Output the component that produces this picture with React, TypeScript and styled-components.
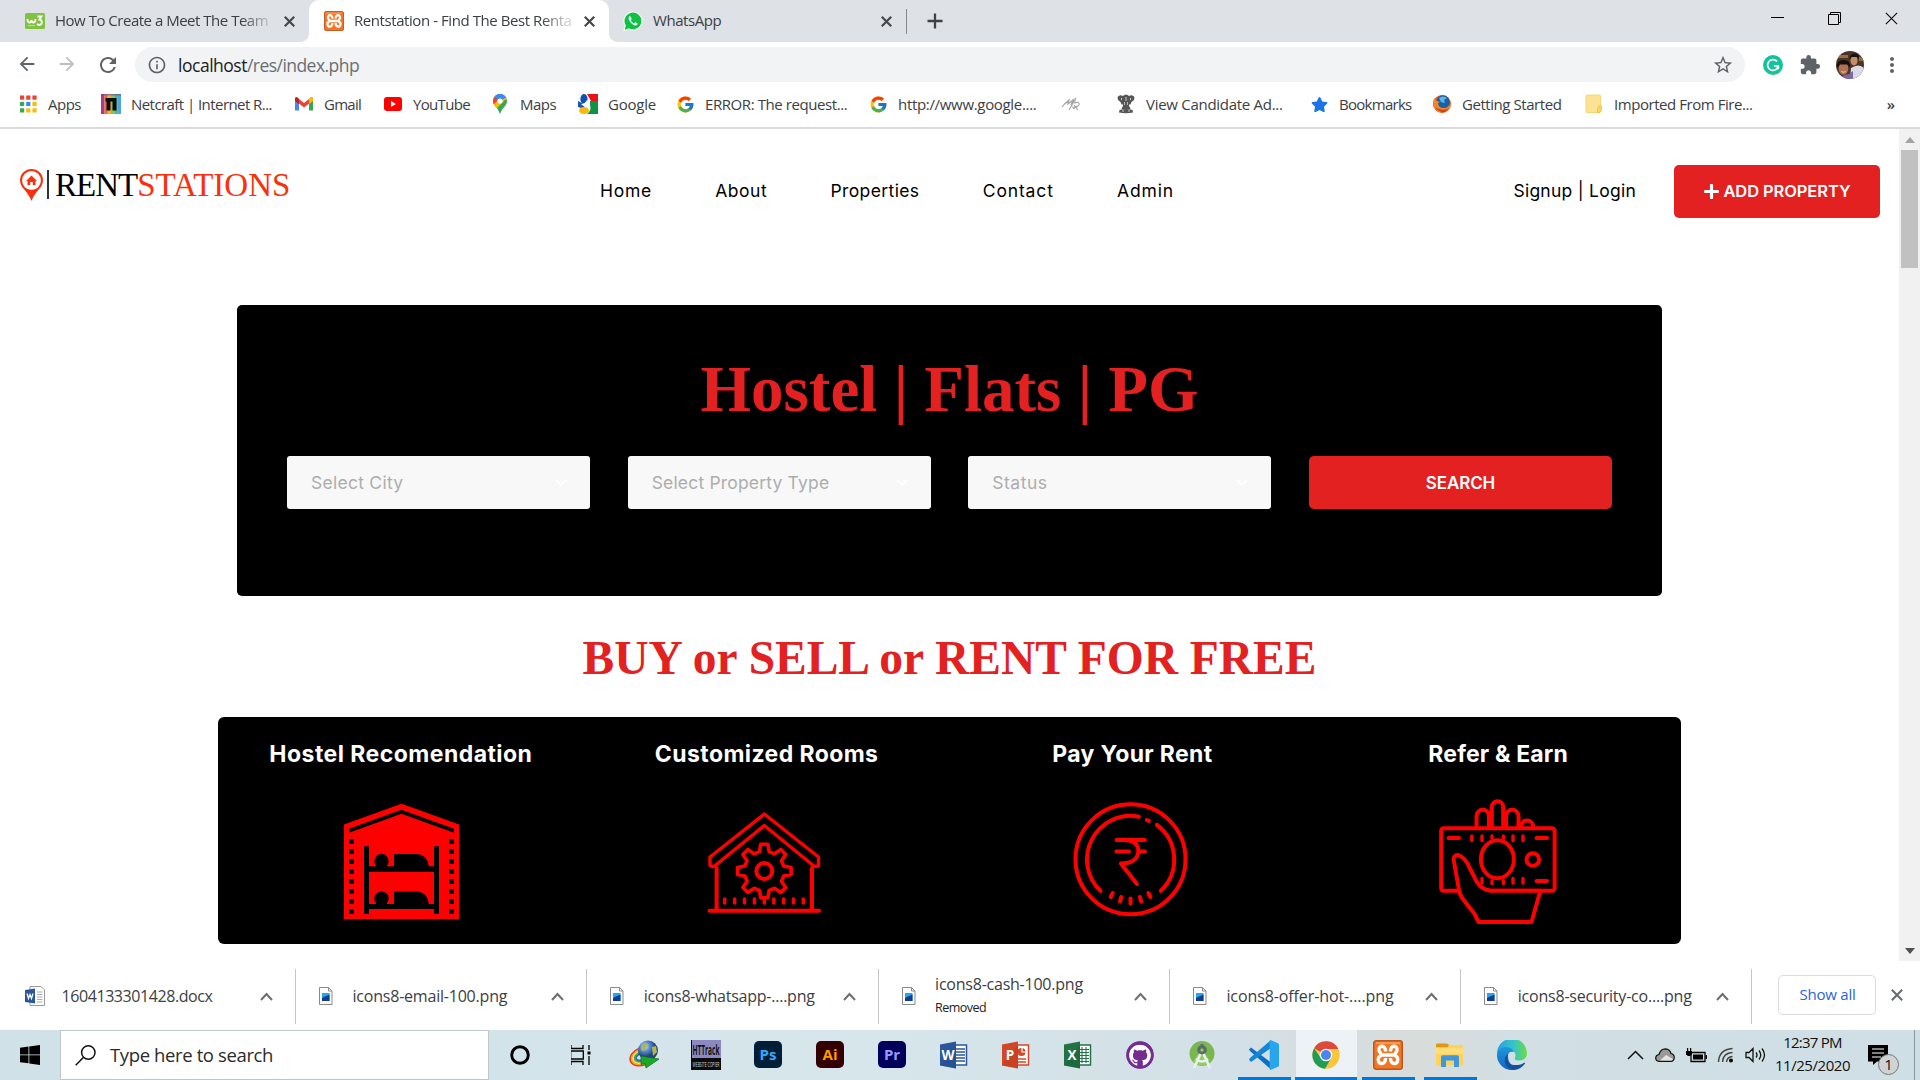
import React from 'react';
import styled, { createGlobalStyle } from 'styled-components';
import { FaGithub, FaPlus, FaStar } from 'react-icons/fa';
import { FcGoogle } from 'react-icons/fc';
import { MdArrowBack, MdArrowForward, MdExtension, MdInfoOutline, MdMoreVert, MdRefresh, MdStarBorder } from 'react-icons/md';

const UI = '"Open Sans", "Noto Sans", sans-serif';
const SITE = 'Inter, "Open Sans", sans-serif';
const SERIF = '"Liberation Serif", "Times New Roman", serif';
const RED = '#e22120';

const Global = createGlobalStyle`
  * { box-sizing: border-box; }
  html, body { margin: 0; padding: 0; overflow: hidden; background: #fff; }
  svg { display: block; flex: none; }
`;

const Screen = styled.div`
  width: 1920px;
  height: 1080px;
  display: flex;
  flex-direction: column;
  overflow: hidden;
  background: #fff;
  font-family: ${UI};
`;

const Label = styled.span<{ $size?: number; $ls?: number; $color?: string }>`
  font-size: ${p => p.$size ?? 15}px;
  letter-spacing: ${p => p.$ls ?? -0.45}px;
  color: ${p => p.$color ?? '#3c4043'};
  line-height: 24px;
  white-space: pre;
`;

/* ---------- tab strip ---------- */
const TabStrip = styled.div`
  flex: none;
  height: 42px;
  display: flex;
  background: #dee1e6;
`;
const Tab = styled.div<{ $active?: boolean; $width: number; $pad: number }>`
  position: relative;
  width: ${p => p.$width}px;
  padding: 0 14px 0 ${p => p.$pad}px;
  display: flex;
  align-items: center;
  gap: 10px;
  background: ${p => (p.$active ? '#fff' : 'transparent')};
  border-radius: ${p => (p.$active ? '10px 10px 0 0' : '0')};
  ${p => p.$active && `
    &::before, &::after { content: ''; position: absolute; bottom: 0; width: 8px; height: 8px; }
    &::before { left: -8px; background: radial-gradient(circle at 0 0, transparent 7.5px, #fff 8px); }
    &::after { right: -8px; background: radial-gradient(circle at 100% 0, transparent 7.5px, #fff 8px); }
  `}
`;
const TabTitle = styled(Label)<{ $fade?: boolean }>`
  flex: 1;
  padding-bottom: 2px;
  line-height: 23px;
  overflow: hidden;
  ${p => p.$fade && 'mask-image: linear-gradient(90deg, #000 calc(100% - 32px), rgba(0,0,0,.25) calc(100% - 8px));'}
`;
const TabDivider = styled.i`
  width: 1px;
  height: 25px;
  margin-top: 9px;
  background: #85888c;
`;
const NewTab = styled.div`
  width: 56px;
  display: grid;
  place-items: center;
`;
const WindowControls = styled.div`
  margin-left: auto;
  padding: 12px 22px 0 0;
  display: flex;
  gap: 44px;
`;

/* ---------- toolbar ---------- */
const Toolbar = styled.div`
  flex: none;
  height: 45px;
  padding: 0 0 0 18px;
  display: flex;
  align-items: center;
`;
const NavButtons = styled.div`
  width: 117px;
  display: flex;
  gap: 18px;
  margin-left: -2px;
`;
const Omnibox = styled.div`
  flex: none;
  width: 1610px;
  height: 35px;
  margin-left: 2px;
  padding: 0 11px 0 12px;
  display: flex;
  align-items: center;
  border-radius: 18px;
  background: #f1f3f4;
`;
const Url = styled.div`
  flex: 1;
  padding-left: 11px;
`;
const ToolbarActions = styled.div`
  width: 159px;
  padding-left: 18px;
  display: flex;
  align-items: center;
  justify-content: space-between;
`;
const Bookmarks = styled.div`
  flex: none;
  height: 42px;
  padding: 0 25px 6px 18px;
  display: flex;
  align-items: center;
  border-bottom: 2px solid #d8dade;
`;
const Bookmark = styled.div<{ $width: number }>`
  width: ${p => p.$width}px;
  display: flex;
  align-items: center;
  gap: 10px;
`;
const IconSlot = styled.span`
  width: 20px;
  display: grid;
  place-items: center;
`;
const More = styled(Label)`
  margin-left: auto;
  font-weight: 600;
`;

/* ---------- viewport ---------- */
const Viewport = styled.div`
  flex: none;
  height: 832px;
  display: flex;
`;
const Page = styled.main`
  width: 1899px;
  display: flex;
  flex-direction: column;
  align-items: center;
  font-family: ${SITE};
`;
const Scrollbar = styled.div`
  width: 21px;
  padding: 0 2px;
  display: flex;
  flex-direction: column;
  align-items: center;
  background: #f1f1f1;
`;
const ScrollThumb = styled.div`
  width: 17px;
  height: 118px;
  background: #c1c1c1;
`;
const ScrollArrow = styled.div`
  height: 21px;
  display: grid;
  place-items: center;
`;
const Spacer = styled.div`
  flex: 1;
`;

const Header = styled.header`
  align-self: stretch;
  flex: none;
  height: 124px;
  padding: 0 19px 0 20px;
  display: flex;
  align-items: center;
`;
const Brand = styled.div`
  width: 580px;
  padding-bottom: 13px;
  display: flex;
  align-items: center;
`;
const BrandBar = styled.i`
  width: 2px;
  height: 29px;
  margin: 0 6px 0 4px;
  background: #333;
`;
const BrandText = styled.span<{ $color: string; $ls: number }>`
  font: 33px/36px ${SERIF};
  letter-spacing: ${p => p.$ls}px;
  color: ${p => p.$color};
`;
const SiteNav = styled.nav`
  display: flex;
  gap: 63.3px;
`;
const SiteLabel = styled(Label)`
  font-family: ${SITE};
`;
const Account = styled.div`
  margin-left: auto;
  padding-right: 38px;
`;
const RedButton = styled.button<{ $width: number }>`
  width: ${p => p.$width}px;
  height: 53px;
  padding: 0;
  display: flex;
  align-items: center;
  justify-content: center;
  gap: 3px;
  border: 0;
  border-radius: 5px;
  background: ${RED};
  font-family: ${SITE};
  font-weight: 600;
`;

const Hero = styled.section`
  flex: none;
  width: 1425px;
  height: 291px;
  margin-top: 52px;
  padding: 47px 50px 0;
  border-radius: 5px;
  background: #000;
`;
const HeroTitle = styled.h1`
  margin: 0 0 30px;
  font: 700 65px/74px ${SERIF};
  text-align: center;
  color: ${RED};
`;
const Filters = styled.div`
  display: flex;
  justify-content: space-between;
`;
const Select = styled.div`
  width: 303px;
  height: 53px;
  padding: 0 23px 0 24px;
  display: flex;
  align-items: center;
  justify-content: space-between;
  border-radius: 3px;
  background: #f8f8f8;
`;
const Slogan = styled.h2`
  margin: 35px 0 32px;
  font: 700 47.500px/54px ${SERIF};
  letter-spacing: -0.03px;
  color: ${RED};
`;
const Features = styled.section`
  flex: none;
  width: 1463px;
  height: 227px;
  display: grid;
  grid-template-columns: repeat(4, 1fr);
  border-radius: 6px;
  background: #000;
`;
const Feature = styled.article`
  display: flex;
  flex-direction: column;
  align-items: center;
  padding-top: 23px;
`;
const FeatureTitle = styled.h3<{ $ls: number }>`
  margin: 0 0 28px;
  font: 700 23px/28px ${SITE};
  letter-spacing: ${p => p.$ls}px;
  color: #fff;
`;

/* ---------- downloads ---------- */
const Shelf = styled.div`
  flex: none;
  height: 69px;
  padding-top: 8px;
  display: flex;
`;
const Download = styled.div<{ $first?: boolean }>`
  width: ${p => (p.$first ? 296 : 291.3)}px;
  height: 55px;
  padding: 0 22px 1px ${p => (p.$first ? 25 : 20)}px;
  display: flex;
  align-items: center;
  gap: 16.500px;
  border-right: 1.5px solid #c6c6c6;
`;
const FileText = styled.div`
  flex: 1;
  display: flex;
  flex-direction: column;
`;
const ShowAll = styled.div`
  width: 98px;
  height: 40px;
  margin: 6px 15px 0 26px;
  padding-bottom: 2px;
  display: grid;
  place-items: center;
  border: 1px solid #dadce0;
  border-radius: 5px;
`;
const ShelfClose = styled.div`
  margin-top: 20px;
`;

/* ---------- taskbar ---------- */
const Taskbar = styled.div`
  flex: none;
  height: 50px;
  display: flex;
  background: linear-gradient(90deg, #d0e1e8, #d3e3ea 25%, #d6e6eb 45%, #d3e0e7 64%, #d8dcdb 74%, #d2dfe4 79%, #cfdfe6);
`;
const Start = styled.div`
  width: 60px;
  display: grid;
  place-items: center;
`;
const SearchBox = styled.div`
  width: 429px;
  padding-left: 14px;
  display: flex;
  align-items: center;
  gap: 14px;
  background: #fff;
  border: 1px solid #bfc7cb;
`;
const TaskButton = styled.div<{ $state?: 'open' | 'active' }>`
  width: 62px;
  display: flex;
  align-items: center;
  justify-content: center;
  padding-top: ${p => (p.$state ? 3 : 0)}px;
  ${p => p.$state === 'active' && 'background: linear-gradient(#ecf2f5, #ecf2f5) center / 61px 100% no-repeat;'}
  border-bottom: ${p => (p.$state ? '3px solid #0078d7' : '0 solid')};
  border-image: ${p => (p.$state === 'open' ? 'linear-gradient(90deg, transparent 6px, #0078d7 6px, #0078d7 57px, transparent 57px) 1' : 'none')};
`;
const Adobe = styled.div<{ $bg: string; $fg: string }>`
  width: 28px;
  height: 27px;
  margin-bottom: 2px;
  display: grid;
  place-items: center;
  border-radius: 5px;
  background: ${p => p.$bg};
  color: ${p => p.$fg};
  font: 700 15px/25px ${UI};
`;
const Tray = styled.div`
  margin-left: auto;
  width: 139px;
  display: flex;
  align-items: center;
  justify-content: space-between;
`;
const Clock = styled.div`
  width: 93px;
  margin-right: 1px;
  padding-bottom: 2px;
  display: flex;
  flex-direction: column;
  align-items: center;
  justify-content: center;
`;
const ClockLine = styled(Label)`
  line-height: 23px;
`;
const Notices = styled.div`
  position: relative;
  width: 54px;
  padding: 15px 0 0 8px;
`;
const Badge = styled.span`
  position: absolute;
  left: 18px;
  top: 24px;
  width: 21px;
  height: 21px;
  border: 1px solid #777;
  border-radius: 50%;
  background: #cfd3d4;
  font: 15px/19px ${UI};
  text-align: center;
  color: #111;
`;
const ShowDesktop = styled.i`
  width: 6px;
  border-left: 1px solid #8a979d;
`;

/* ---------- icons ---------- */
const Cross = ({ size = 10, color = '#45494d', w = 2 }: { size?: number; color?: string; w?: number }) => (
  <svg width={size} height={size} viewBox="0 0 10 10"><path d="M.7.7l8.6 8.6M9.3.7L.7 9.3" stroke={color} strokeWidth={w} /></svg>
);
const Caret = () => (
  <svg width="13" height="9" viewBox="0 0 13 9"><path d="M1 8l5.5-6L12 8" fill="none" stroke="#6b6f73" strokeWidth="2" /></svg>
);
const W3Icon = () => (
  <svg width="20" height="20" viewBox="0 0 20 20">
    <rect y="2" width="20" height="16" rx="1.5" fill="#80c342" />
    <path d="M2.5 8q0 3.500 2 3.500t2-2.500q0 2.500 2 2.500t2-3.500M12.500 5.500h4l-2 3q2.500.3 2.300 3-.3 2.700-2.600 2.500-1.500-.1-2-1.400" fill="none" stroke="#fff" strokeWidth="1.800" />
    <path d="M3 14.700h7" stroke="#c8e6a8" strokeWidth=".9" />
  </svg>
);
const XamppIcon = ({ size = 20 }: { size?: number }) => (
  <svg width={size} height={size} viewBox="0 0 30 30">
    <rect x=".7" y=".7" width="28.600" height="28.600" rx="2.500" fill="#f37623" stroke="#bd5618" strokeWidth="1.400" />
    <path d="M3 2.500h24v1.300H3z" fill="#f7ae7c" />
    <path d="M12.500 11.500C13 4.500 5 5 6 10.500 6.500 13 9 13 8 15.500 4 17 4.500 24 9 23.500 12.500 23 12.500 20 12.500 18M17.500 11.500C17 4.500 25 5 24 10.500 23.500 13 21 13 22 15.500 26 17 25.500 24 21 23.500 17.500 23 17.500 20 17.500 18M9 15h12" fill="none" stroke="#fff" strokeWidth="3.400" />
  </svg>
);
const WhatsAppIcon = () => (
  <svg width="20" height="20" viewBox="0 0 20 20">
    <path d="M1 19.500l1.200-5A9 9 0 1 1 6 18z" fill="#0fc144" stroke="#f2fbf4" strokeWidth="1.200" />
    <path d="M6.300 5.500c-1 1-.8 2.600.2 4.300 1.300 2.200 3.200 4 5.500 4.600 1.400.2 2.500-.6 2.600-1.900l-2.200-1.200-1.200 1.200c-1.500-.5-2.700-1.700-3.500-3.200l1-1.200-1-2.500z" fill="#fff" />
  </svg>
);
const AppsIcon = () => (
  <svg width="20" height="20" viewBox="0 0 20 20">
    {['#ea4335', '#ea4335', '#ea4335', '#34a853', '#4285f4', '#fbbc04', '#34a853', '#fbbc04', '#fbbc04'].map((c, i) => (
      <rect key={i} x={2 + (i % 3) * 6.200} y={1.500 + Math.floor(i / 3) * 6.400} width="4.200" height="4.200" fill={c} />
    ))}
  </svg>
);
const NetcraftIcon = () => (
  <svg width="20" height="20" viewBox="0 0 20 20">
    {['#b0378f', '#e0713a', '#eab62f', '#8fc14b', '#45b88f', '#4fa7d8'].map((c, i) => <rect key={c} x={i * 3.330} width="3.500" height="20" fill={c} />)}
    <path d="M0 0h20v1.500H0z" fill="#6a4aa0" opacity=".6" />
    <path d="M4.500 4h11v12.500h-4V7.500h-2v9h-4V7.500h-1z" fill="#0a0a0a" />
  </svg>
);
const GmailIcon = () => (
  <svg width="20" height="20" viewBox="0 0 20 20">
    <path d="M1 5v11.500h4V9z" fill="#4285f4" /><path d="M19 5v11.500h-4V9z" fill="#34a853" />
    <path d="M1 4.500Q1 3 2.500 3L10 9l7.500-6Q19 3 19 4.500v2L10 13.500 1 6.500z" fill="#ea4335" />
    <path d="M15 5l1.500-1.500Q19 2.500 19 5v2l-4 3z" fill="#fbbc04" /><path d="M5 5L3.500 3.500Q1 2.500 1 5v2l4 3z" fill="#c5221f" />
  </svg>
);
const YouTubeIcon = () => (
  <svg width="20" height="20" viewBox="0 0 20 20"><rect x="1" y="3" width="18" height="14" rx="3" fill="#f00" /><path d="M8 7l5 3-5 3z" fill="#fff" /></svg>
);
const MapsIcon = () => (
  <svg width="20" height="20" viewBox="0 0 20 20">
    <clipPath id="pin"><path d="M10 0a7 7 0 0 1 7 7c0 5-5.500 6.500-7 13-1.500-6.500-7-8-7-13a7 7 0 0 1 7-7z" /></clipPath>
    <g clipPath="url(#pin)"><path d="M0 0h20v20H0z" fill="#34a853" /><path d="M0 0l10 7-6 7-4-3z" fill="#ea4335" /><path d="M4 0h14l-8 7-6-5z" fill="#4285f4" /><path d="M17 4L5 16 2 12l8-8z" fill="#fbbc04" /><path d="M17 6L6 19h8z" fill="#34a853" /><path d="M4 2L8 0h9v3l-7 4z" fill="#4285f4" /></g>
    <circle cx="10" cy="7" r="2.600" fill="#fff" />
  </svg>
);
const OldGoogleIcon = () => (
  <svg width="20" height="20" viewBox="0 0 20 20">
    <path d="M9 0h11v7h-7z" fill="#e8131a" /><path d="M12 7h8v13H9q5-4 3-9z" fill="#0b9444" /><path d="M0 7l8 4-2 4-6-2z" fill="#1a57b5" />
    <ellipse cx="6" cy="5" rx="3.600" ry="5" fill="#1250b0" /><path d="M3 10q4 0 6-4l3 3q1 5-4 5z" fill="#fff" /><ellipse cx="6" cy="16.500" rx="5" ry="3.500" fill="#f6b90c" />
  </svg>
);
const SketchIcon = () => (
  <svg width="20" height="16" viewBox="0 0 20 16"><path d="M1 11q3-4 7-7l-1 4 5-4-2 5 5-7-7 12M3 8l4-2M13 7q6-2 5 2-2 3-7 2M13 9l4 5M11 4l4 1M12 13l4-3" fill="none" stroke="#a5a5a5" strokeWidth="1.200" /></svg>
);
const EmblemIcon = () => (
  <svg width="20" height="20" viewBox="0 0 20 20" fill="#555">
    <path d="M1.500 3Q4 0 7 2q3-3 6 0 3-2 5.500 1l-.5 3-2.500 2-1 2.500H13V13H7v-2.500H5.500l-1-2.500L2 6z" /><path d="M6.500 12.500h7l1 2.500h-9zM3.500 16q6.500-2 13 0l.5 2.500q-7 1.500-14 0z" />
    <path d="M5 4h1v2H5zM9.500 3h1v4h-1zM14 4h1v2h-1zM8 8h.8v3H8zM11.200 8h.8v3h-.8zM6 16.500h2v1H6zM12 16.500h2v1h-2z" fill="#ccc" />
  </svg>
);
const FirefoxIcon = () => (
  <svg width="20" height="20" viewBox="0 0 20 20">
    <circle cx="10" cy="10" r="9" fill="#e2571c" /><circle cx="11" cy="8" r="6.800" fill="#1f5fa8" /><path d="M7 4q4-3 8 0l-3 2 1 3-4-1z" fill="#56b8e8" />
    <path d="M2 4q-2 8 2 12 6 5 12 0 3-3 3-8-2 6-7 6Q6 14 6 9L8 8 5 7z" fill="#f0882a" /><path d="M3 13q4 6 10 5l5-5q-6 6-15 0z" fill="#d63e1c" />
  </svg>
);
const FolderIcon = () => (
  <svg width="20" height="20" viewBox="0 0 20 20"><rect x="2" y="1" width="14.500" height="17.500" rx="1" fill="#fde293" stroke="#f3cf63" strokeWidth=".8" /><path d="M13.500 18.500v-5l1.500-1.500h2.500v5l-1.500 1.500z" fill="#fbd45c" stroke="#e9b93d" strokeWidth=".6" /></svg>
);
const GrammarlyIcon = () => (
  <svg width="20" height="20" viewBox="0 0 20 20"><circle cx="10" cy="10" r="10" fill="#15c39a" /><path d="M14 6.400a5.400 5.400 0 1 0 1.300 4.600h-4.500M15.300 11v3.200" fill="none" stroke="#fff" strokeWidth="1.700" /></svg>
);
const Avatar = () => (
  <svg width="28" height="28" viewBox="0 0 28 28">
    <clipPath id="face"><circle cx="14" cy="14" r="14" /></clipPath>
    <g clipPath="url(#face)">
      <path d="M0 0h28v28H0z" fill="#4c3426" /><path d="M2 4h10v3H2zM23 6h5v4h-5z" fill="#94703c" />
      <path d="M14 28l1-11q8-5 13 0v11z" fill="#dcdae6" /><ellipse cx="18" cy="9.500" rx="3.500" ry="5" fill="#c48c69" /><path d="M13.500 9q0-6.500 5-6.500t4.500 6.500l-1.500-3h-6z" fill="#19120f" />
      <path d="M3 28q3-4 10-5l4-3v8z" fill="#7d68a6" /><ellipse cx="7.500" cy="17.500" rx="4.800" ry="6.300" fill="#b07350" /><path d="M1 17Q0 9 7.500 9t6.500 8l-2.500-3.500H4z" fill="#17100d" />
      <path d="M5.500 20.500q2 1.500 4 0" stroke="#eee" fill="none" strokeWidth=".8" />
    </g>
  </svg>
);
const BrandPin = () => (
  <svg width="23" height="32" viewBox="0 0 23 32">
    <path d="M11.500 0A11.500 11.500 0 0 1 23 11.500C23 19 15 22 11.500 32 8 22 0 19 0 11.500A11.500 11.500 0 0 1 11.500 0z" fill="#f8310c" />
    <circle cx="11.500" cy="11.500" r="9.400" fill="#fff" /><path d="M11.500 6.500L17 12h-1.500v4h-2.700v-3h-2.600v3H7.500v-4H6z" fill="#f8310c" />
  </svg>
);
const ImageFile = () => (
  <svg width="20" height="20" viewBox="0 0 20 20">
    <path d="M3.500 1.500h9l3.500 3.500v13.500H3.500z" fill="#fdfdfd" stroke="#8b8b8b" /><path d="M12.500 1.500V5H16" fill="none" stroke="#8b8b8b" />
    <path d="M6 7h7.500v8H6z" fill="#2aa4ee" /><path d="M6 15v-3l3-1.500 4.500-2V15z" fill="#103f92" />
  </svg>
);
const WordFile = () => (
  <svg width="20" height="20" viewBox="0 0 20 20">
    <path d="M5 .5h11l3.500 3.500v15.500H5z" fill="#fff" stroke="#9a9a9a" /><path d="M12 6h5.500M12 8.500h5.500M12 11h5.500M12 13.500h5.500M12 16h5.500" stroke="#aaa" />
    <path d="M0 4l10-1.500v15L0 16z" fill="#2b579a" /><path d="M2 7.500l1.500 5 1.500-4 1.500 4L8 7.500" fill="none" stroke="#fff" strokeWidth="1.300" />
  </svg>
);
const OfficeIcon = ({ color, dark, letter, kind }: { color: string; dark: string; letter: string; kind: 'w' | 'p' | 'x' }) => (
  <svg width="28" height="28" viewBox="0 0 28 28">
    <rect x="13" y="4" width="13.500" height="20" fill="#fff" stroke={color} strokeWidth="1.500" />
    {kind === 'w' && <path d="M15 8h10M15 11h10M15 14h10M15 17h10M15 20h10" stroke={color} strokeWidth="1.300" />}
    {kind === 'p' && <><circle cx="19.500" cy="11" r="4" fill={color} /><path d="M20 6v5h5" stroke="#fff" strokeWidth="1.200" fill="none" /><path d="M16 18h8M16 21h8" stroke={color} strokeWidth="1.300" /></>}
    {kind === 'x' && <path d="M18 6v16M22 6v16M15 8.500h10M15 11.500h10M15 14.500h10M15 17.500h10M15 20.500h10" stroke={color} strokeWidth="1.100" />}
    <path d="M0 3.500L16 .5v27L0 24.500z" fill={color} /><path d="M0 24.500l16-21v24z" fill={dark} opacity=".25" />
    <text x="8" y="19" textAnchor="middle" fontFamily="Open Sans" fontWeight="700" fontSize="13.500" fill="#fff">{letter}</text>
  </svg>
);
const IdmIcon = () => (
  <svg width="30" height="30" viewBox="0 0 30 30">
    <defs><radialGradient id="globe" cx=".35" cy=".3"><stop offset="0" stopColor="#d3ecff" /><stop offset=".45" stopColor="#5b92d6" /><stop offset="1" stopColor="#24427e" /></radialGradient></defs>
    {['#e5352b', '#f7a51c', '#f6e535', '#3fb13c', '#3565c9'].map((c, i) => <ellipse key={c} cx="13" cy="16.500" rx={12.500 - i * 1.500} ry={8.500 - i * 1.300} fill="none" stroke={c} strokeWidth="1.700" transform="rotate(-22 13 16)" />)}
    <circle cx="19" cy="10.500" r="10" fill="url(#globe)" /><path d="M12 6q4-4 7-2l-2 4-3 3-2-1zM23 7l4-1 1 6-4 4z" fill="#b3b64d" />
    <path d="M12 16l18 3-13 9-1-4.500-4 1z" fill="#19a827" stroke="#0c6d18" strokeWidth=".7" />
  </svg>
);
const HtTrackIcon = () => (
  <svg width="30" height="30" viewBox="0 0 30 30">
    <path d="M0 0h30v30H0z" fill="#0b0b0b" /><path d="M1 0h29v18H1z" fill="#8b89bf" />
    <text x="1.500" y="15" textLength="27" lengthAdjust="spacingAndGlyphs" fontFamily="Open Sans" fontWeight="700" fontSize="14" fill="#111">HTTrack</text>
    <text x="1.500" y="27" textLength="27" lengthAdjust="spacingAndGlyphs" fontFamily="Open Sans" fontSize="7" fill="#ddd">WEBSITE COPIER</text>
  </svg>
);
const AndroidStudioIcon = () => (
  <svg width="28" height="30" viewBox="0 0 28 30">
    <circle cx="14" cy="13.500" r="12.500" fill="#79b84e" /><path d="M5 22L14 8l8 14q-8 7-17 0z" fill="#8ed05e" />
    <circle cx="14" cy="10" r="3.300" fill="none" stroke="#5d6a6e" strokeWidth="3" /><path d="M14 4v3" stroke="#5d6a6e" strokeWidth="3" />
    <path d="M12.500 14L6 28M15.500 14l6.500 14" stroke="#eceff1" strokeWidth="2.600" /><path d="M8 19q6 5 12 0" fill="none" stroke="#eceff1" strokeWidth="2.400" />
  </svg>
);
const VsCodeIcon = () => (
  <svg width="30" height="30" viewBox="0 0 30 30">
    <path d="M0 9.500l2-2 20 15v7L1 11z" fill="#0e70c0" /><path d="M0 19.500l2 2.500L22 8V0L1 18z" fill="#1487d4" />
    <path d="M21.500 0L29 3.200q1 .5 1 1.500v20.500q0 1-1 1.500L21.500 30q-.8-.2-.8-1.200V1.200Q20.700.2 21.500 0z" fill="#27a5ee" />
  </svg>
);
const ChromeIcon = () => (
  <svg width="28" height="28" viewBox="0 0 28 28">
    <circle cx="14" cy="14" r="13.700" fill="#fbc63c" /><path d="M14 14L2.140 7.150A13.700 13.700 0 0 1 26.300 8H14z" fill="#dc4a3d" />
    <path d="M2.140 7.150A13.700 13.700 0 0 0 13 27.660L19.200 17 14 14 8.800 17z" fill="#1f9d58" />
    <circle cx="14" cy="14" r="6.300" fill="#f4f7f8" /><circle cx="14" cy="14" r="5" fill="#4b85ee" />
  </svg>
);
const ExplorerIcon = () => (
  <svg width="28" height="25" viewBox="0 0 28 25">
    <path d="M0 2h27v20.500H0z" fill="#fdd35c" /><path d="M0 2q0-1.500 1.500-1.500h9Q12 .5 13 2l-1.500 2.200H0z" fill="#dd9a10" /><path d="M0 5h27v6H0z" fill="#ffdd78" />
    <path d="M5 24V14q0-1.700 1.700-1.700h14.600q1.700 0 1.700 1.700v10h-5v-6.500h-8V24z" fill="#3f97dc" />
  </svg>
);
const EdgeIcon = () => (
  <svg width="30" height="30" viewBox="0 0 30 30">
    <defs>
      <linearGradient id="edgeTop" x1="0" x2="1"><stop offset="0" stopColor="#2a9fe0" /><stop offset=".55" stopColor="#34c5c9" /><stop offset="1" stopColor="#6bdc45" /></linearGradient>
      <linearGradient id="edgeBody" y1="0" y2="1" x1="0" x2="0"><stop offset="0" stopColor="#1f98dd" /><stop offset="1" stopColor="#1264bd" /></linearGradient>
    </defs>
    <path d="M0 14A15 15 0 0 1 30 13q0 7-8 7.500-5 0-4-3 1.500-3-1-6Q8 5 0 14z" fill="url(#edgeTop)" />
    <path d="M0 14q2-7 9-7 6 .5 8 5-5-1.500-6 3-.5 8 8 14.500A15 15 0 0 1 0 14z" fill="url(#edgeBody)" />
    <path d="M11 14q-3 12 10 11 4-.5 6.500-2.500.8.200.3 1.200-4 6-11.300 6.300Q6 27 8 18q1-3 3-4z" fill="#12509b" />
  </svg>
);

const TRACE = { fill: 'none', stroke: '#f00', strokeWidth: 4, strokeLinecap: 'round' as const, strokeLinejoin: 'round' as const };
const HostelIcon = () => (
  <svg width="130" height="130" viewBox="0 0 130 130">
    <path d="M8 28.500L65.500 7.700 123 28.500V123H8z" fill="#f00" />
    <path d="M13 32.700L65.500 13.700 118 32.700v4L65.500 17.700 13 36.700z" />
    {Array.from({ length: 8 }, (_, i) => <path key={i} d={`M13 ${43 + i * 10}h5v5h-5zM113 ${43 + i * 10}h5v5h-5z`} />)}
    <path d="M28 50.300h5V118h-5zM98 50.300h5V118h-5zM28 70.300h75v5.400H28zM28 108h75v5H28z" />
    {[0, 37.600].map(dy => <g key={dy} transform={`translate(0 ${dy})`}><circle cx="45.500" cy="65" r="7.200" /><path d="M40 69h11v3H40zM58 58h22c8 0 12 5 13 13H58z" /></g>)}
  </svg>
);
const gear = (() => {
  const pts: string[] = [];
  for (let i = 0; i < 8; i++) {
    const a = (i * Math.PI) / 4 - Math.PI / 2;
    [[-0.25, 20], [-0.13, 27], [0.13, 27], [0.25, 20]].forEach(([d, r]) => pts.push(`${(63.300 + r * Math.cos(a + d)).toFixed(1)} ${(75 + r * Math.sin(a + d)).toFixed(1)}`));
  }
  return `M${pts.join('L')}Z`;
})();
const RoomsIcon = () => (
  <svg width="130" height="130" viewBox="1 0 130 130" {...TRACE}>
    <path d="M63.300 18L117.500 61v8.500q-4 2.500-7-1.500L63.300 29.500 16 68q-3 4-7 1.500V61z" strokeWidth="3.400" />
    <path d="M15.600 72v42M111 72v42M8.500 114.700h109.500" /><path d={gear} strokeWidth="3.600" /><circle cx="63.300" cy="75" r="8" />
    {[23.700, 33.600, 43.500, 53.400, 63.300, 72.800, 82.600, 92.400, 102.300].map(x => <path key={x} d={`M${x} 103v4`} strokeWidth="3.500" />)}
  </svg>
);
const RupeeIcon = () => (
  <svg width="130" height="130" viewBox="0 0 130 130" {...TRACE}>
    <circle cx="63.500" cy="63.300" r="55" />
    <path d="M71.900 20.700A43.500 43.500 0 0 0 33.400 94.800M79.900 24.100l2 .8M89.900 28.800A43.500 43.500 0 0 1 93.900 94.800" />
    <path d="M45.700 97l-2 4M54.200 101l-1.200 4.500M63.500 102.500v5M72.900 101l1.200 4.500M81.400 97l2 4" />
    <path d="M49.400 44h28.500M49.400 55.500h12.500M71.400 55.500h6.500M58.400 44c9 .5 13 5 13 11.500-1 8-6 12-17.500 12L69.900 88" />
  </svg>
);
const CashIcon = () => (
  <svg width="130" height="130" viewBox="0 0 130 130" {...TRACE}>
    <path d="M43.500 31V20a6.200 6.200 0 0 1 12.500 0v11M58.800 31V11a5.700 5.700 0 0 1 11.400 0v20M73 31V20a6.200 6.200 0 0 1 12.500 0v11M88 30a6 6 0 0 1 12 1" />
    <rect x="8.200" y="32.300" width="113.400" height="62.400" rx="2.500" />
    <ellipse cx="64.400" cy="63.300" rx="16.500" ry="19" /><circle cx="99.800" cy="63.500" r="6.300" />
    <path d="M15.500 42H26M103.500 42H114M103.500 85H114" />
    <path d="M38.800 40v4.500M49 40v4.500M59 40v2M70.400 40v2M80 40v4.500M90 40v4.500M49 82.500V87M59 85v2.500M70.400 85v2.500M80 82.500V87M90 82.500V87" strokeWidth="3.400" />
    <path d="M107 96L98.500 125.500H46L41.600 119 32 105.700Q25.500 98 25.500 91L20.500 63q1-5.500 6-3.500 6 3 9.500 11l5 10Q46 93 57 94.700z" fill="#000" stroke="none" />
    <path d="M107 96L98.500 126H45.500L41.600 118 32 105.700Q25.500 98 25.500 91L20.500 63q1-5.500 6-3.500 6 3 9.500 11l5 10Q46 93 57 94.700H107" />
  </svg>
);

const bookmarks: [number, React.ReactNode, string, number][] = [
  [83, <AppsIcon />, 'Apps', -0.5], [193, <NetcraftIcon />, 'Netcraft | Internet R...', -0.56], [89, <GmailIcon />, 'Gmail', -0.74],
  [107, <YouTubeIcon />, 'YouTube', -0.67], [88, <MapsIcon />, 'Maps', -0.54], [97, <OldGoogleIcon />, 'Google', -0.22],
  [193, <FcGoogle size={19} />, 'ERROR: The request...', -0.42], [193, <FcGoogle size={19} />, 'http://www.google....', -0.32], [55, <SketchIcon />, '', 0],
  [193, <EmblemIcon />, 'View Candidate Ad...', -0.28], [123, <FaStar size={17} color="#1a73e8" />, 'Bookmarks', -0.72],
  [152, <FirefoxIcon />, 'Getting Started', -0.44], [180, <FolderIcon />, 'Imported From Fire...', -0.45],
];
const nav: [string, number][] = [['Home', 0.7], ['About', 0.54], ['Properties', 0.38], ['Contact', 0.86], ['Admin', 0.86]];
const filters: [string, number][] = [['Select City', 0.26], ['Select Property Type', 0.18], ['Status', 0.5]];
const features: [string, number, React.ReactNode][] = [
  ['Hostel Recomendation', 0.46, <HostelIcon />], ['Customized Rooms', 0.41, <RoomsIcon />], ['Pay Your Rent', 0.34, <RupeeIcon />], ['Refer & Earn', 0.15, <CashIcon />],
];
const downloads: [string, number, string?][] = [
  ['1604133301428.docx', -0.42], ['icons8-email-100.png', -0.21], ['icons8-whatsapp-....png', -0.23], ['icons8-cash-100.png', -0.23, 'Removed'],
  ['icons8-offer-hot-....png', -0.1], ['icons8-security-co....png', -0.2],
];

export default function App() {
  return (
    <Screen>
      <Global />
      <TabStrip>
        <Tab $width={309} $pad={25}><W3Icon /><TabTitle $fade $ls={-0.49}>How To Create a Meet The Team</TabTitle><Cross size={11} /></Tab>
        <Tab $active $width={300} $pad={15}><XamppIcon /><TabTitle $fade $ls={-0.43}>Rentstation - Find The Best Renta</TabTitle><Cross size={11} /></Tab>
        <Tab $width={297} $pad={14}><WhatsAppIcon /><TabTitle>WhatsApp</TabTitle><Cross size={11} /></Tab>
        <TabDivider />
        <NewTab><svg width="16" height="16" viewBox="0 0 16 16"><path d="M8 .5v15M.5 8h15" stroke="#3f4347" strokeWidth="2.300" /></svg></NewTab>
        <WindowControls>
          <svg width="13" height="13" viewBox="0 0 13 13"><path d="M0 5.500h13" stroke="#000" /></svg>
          <svg width="13" height="13" viewBox="0 0 13 13"><path d="M.5 2.500h10v10H.5zM2.500 2.500v-2h10v10h-2" fill="none" stroke="#000" /></svg>
          <Cross size={13} color="#111" w={0.9} />
        </WindowControls>
      </TabStrip>
      <Toolbar>
        <NavButtons><MdArrowBack size={22} color="#5f6368" /><MdArrowForward size={22} color="#bdbfc2" /><MdRefresh size={24} color="#5f6368" /></NavButtons>
        <Omnibox>
          <MdInfoOutline size={20} color="#5f6368" />
          <Url><Label $size={17.500} $ls={-0.48} $color="#202124">localhost</Label><Label $size={17.500} $ls={-0.55} $color="#6a6e73">/res/index.php</Label></Url>
          <MdStarBorder size={22} color="#5f6368" />
        </Omnibox>
        <ToolbarActions><GrammarlyIcon /><MdExtension size={22} color="#5f6368" /><Avatar /><MdMoreVert size={24} color="#5f6368" /></ToolbarActions>
      </Toolbar>
      <Bookmarks>
        {bookmarks.map(([w, icon, text, ls], i) => <Bookmark key={i} $width={w}><IconSlot>{icon}</IconSlot><Label $ls={ls}>{text}</Label></Bookmark>)}
        <More $ls={0}>»</More>
      </Bookmarks>
      <Viewport>
        <Page>
          <Header>
            <Brand><BrandPin /><BrandBar /><BrandText $color="#000" $ls={-1}>RENT</BrandText><BrandText $color="#f8310c" $ls={0}>STATIONS</BrandText></Brand>
            <SiteNav>{nav.map(([t, ls]) => <SiteLabel key={t} $size={17.500} $ls={ls} $color="#000">{t}</SiteLabel>)}</SiteNav>
            <Account><SiteLabel $size={17.500} $ls={0.26} $color="#000">Signup | Login</SiteLabel></Account>
            <RedButton $width={206}><FaPlus size={17} color="#fff" /><SiteLabel $size={16.500} $ls={-0.1} $color="#fff">ADD PROPERTY</SiteLabel></RedButton>
          </Header>
          <Hero>
            <HeroTitle>Hostel | Flats | PG</HeroTitle>
            <Filters>
              {filters.map(([t, ls]) => (
                <Select key={t}><SiteLabel $size={17.500} $ls={ls} $color="#adadad">{t}</SiteLabel><svg width="12" height="8" viewBox="0 0 12 8"><path d="M1 1l5 5 5-5" fill="none" stroke="#fff" strokeWidth="1.800" /></svg></Select>
              ))}
              <RedButton $width={303}><SiteLabel $size={17} $ls={-0.12} $color="#fff">SEARCH</SiteLabel></RedButton>
            </Filters>
          </Hero>
          <Slogan>BUY or SELL or RENT FOR FREE</Slogan>
          <Features>{features.map(([t, ls, icon]) => <Feature key={t}><FeatureTitle $ls={ls}>{t}</FeatureTitle>{icon}</Feature>)}</Features>
        </Page>
        <Scrollbar>
          <ScrollArrow><svg width="10" height="6" viewBox="0 0 10 6"><path d="M0 6l5-6 5 6z" fill="#a3a3a3" /></svg></ScrollArrow>
          <ScrollThumb />
          <Spacer />
          <ScrollArrow><svg width="10" height="6" viewBox="0 0 10 6"><path d="M0 0l5 6 5-6z" fill="#505050" /></svg></ScrollArrow>
        </Scrollbar>
      </Viewport>
      <Shelf>
        {downloads.map(([name, ls, note], i) => (
          <Download key={name} $first={i === 0}>
            {i === 0 ? <WordFile /> : <ImageFile />}
            <FileText><Label $size={16} $ls={ls}>{name}</Label>{note && <Label $size={12.500} $ls={-0.53} $color="#222">{note}</Label>}</FileText>
            <Caret />
          </Download>
        ))}
        <ShowAll><Label $ls={-0.22} $color="#2b63e3">Show all</Label></ShowAll>
        <ShelfClose><Cross size={12} color="#6a6e72" w={1.800} /></ShelfClose>
      </Shelf>
      <Taskbar>
        <Start><svg width="20" height="20" viewBox="0 0 20 20"><path d="M0 2.800l8.500-1.200v7.900H0zM9.300 1.500L20 0v9.500H9.300zM0 10.300h8.500v8L0 17.200zM9.300 10.300H20V20L9.300 18.500z" /></svg></Start>
        <SearchBox>
          <svg width="21" height="21" viewBox="0 0 21 21"><circle cx="13.300" cy="7.500" r="6.700" fill="none" stroke="#111" strokeWidth="1.500" /><path d="M8.600 12.300L.7 20.300" stroke="#111" strokeWidth="1.500" /></svg>
          <Label $size={18.500} $ls={-0.38} $color="#2b2b2b">Type here to search</Label>
        </SearchBox>
        <TaskButton><svg width="20" height="20" viewBox="0 0 20 20"><circle cx="10" cy="10" r="8.300" fill="none" stroke="#000" strokeWidth="2.900" /></svg></TaskButton>
        <TaskButton><svg width="22" height="20" viewBox="1 0 22 20"><path d="M1 0v3.500h12V0M1 20v-3.500h12V20M.7 6h12.600v8H.7zM19 0v5M19 11v9" fill="none" stroke="#000" strokeWidth="1.300" /><path d="M17.500 6.500h3v3h-3z" /></svg></TaskButton>
        <TaskButton><IdmIcon /></TaskButton>
        <TaskButton><HtTrackIcon /></TaskButton>
        <TaskButton><Adobe $bg="#001e36" $fg="#31a8ff">Ps</Adobe></TaskButton>
        <TaskButton><Adobe $bg="#330000" $fg="#ff9a00">Ai</Adobe></TaskButton>
        <TaskButton><Adobe $bg="#00005b" $fg="#9999ff">Pr</Adobe></TaskButton>
        <TaskButton><OfficeIcon color="#2b579a" dark="#1a3f7a" letter="W" kind="w" /></TaskButton>
        <TaskButton><OfficeIcon color="#d24726" dark="#a83418" letter="P" kind="p" /></TaskButton>
        <TaskButton><OfficeIcon color="#217346" dark="#12502d" letter="X" kind="x" /></TaskButton>
        <TaskButton><svg width="28" height="28" viewBox="0 0 28 28"><circle cx="14" cy="14" r="13.500" fill="#752c8f" /><FaGithub x={2.500} y={3.500} size={23} color="#fff" /><circle cx="14" cy="14" r="12.300" fill="none" stroke="#752c8f" strokeWidth="2.800" /></svg></TaskButton>
        <TaskButton><AndroidStudioIcon /></TaskButton>
        <TaskButton $state="open"><VsCodeIcon /></TaskButton>
        <TaskButton $state="active"><ChromeIcon /></TaskButton>
        <TaskButton $state="open"><XamppIcon size={30} /></TaskButton>
        <TaskButton $state="open"><ExplorerIcon /></TaskButton>
        <TaskButton><EdgeIcon /></TaskButton>
        <Tray>
          <svg width="17" height="10" viewBox="0 0 17 10"><path d="M1 9l7.500-7.500L16 9" fill="none" stroke="#111" strokeWidth="1.500" /></svg>
          <svg width="20" height="14" viewBox="0 0 20 14"><path d="M4 13.300Q.7 13 .7 10 .8 7 4 6.500 5.500.8 10.500.8q4.500.2 5.500 4.700 3.300.7 3.300 4.200-.3 3.600-3.300 3.600z" fill="#9a9a9a" stroke="#111" strokeWidth="1.200" /><path d="M5 12.500l6-5.500 7 4q-1 1.500-2 1.500z" fill="#e4e4e4" /></svg>
          <svg width="21" height="15" viewBox="0 0 21 15"><path d="M5 4.500h14v9H5z" fill="none" stroke="#000" strokeWidth="1.300" /><path d="M7 6.500h10v5H7zM19.500 7H21v4h-1.500zM0 3h6v3.500L4 8H2L0 6.500zM1 0h1.200v3H1zM4 0h1.200v3H4z" /></svg>
          <svg width="17" height="16" viewBox="0 0 17 16"><path d="M1.500 15Q2 2.500 15.500 1.500M5.500 15q.5-9 10-9.500M9.500 15q.5-5 6-5.500" fill="none" stroke="#444" strokeWidth="1.400" /><circle cx="14" cy="13.500" r="2" /></svg>
          <svg width="21" height="16" viewBox="0 0 21 16"><path d="M1 5.500h3L8 1.500v13l-4-4H1zM11 5.500q2 2.500 0 5M14 3.500q3.500 4.500 0 9M17 1.500q5 6.500 0 13" fill="none" stroke="#111" strokeWidth="1.300" /></svg>
        </Tray>
        <Clock><ClockLine $ls={-0.77} $color="#111">12:37 PM</ClockLine><ClockLine $ls={-0.46} $color="#111">11/25/2020</ClockLine></Clock>
        <Notices>
          <svg width="20" height="20" viewBox="0 0 20 20"><path d="M0 0h20v16.500H9L5 20v-3.500H0z" /><path d="M4 4h12M4 8h12M4 12h9" stroke="#fff" strokeWidth="1.200" /></svg>
          <Badge>1</Badge>
        </Notices>
        <ShowDesktop />
      </Taskbar>
    </Screen>
  );
}
